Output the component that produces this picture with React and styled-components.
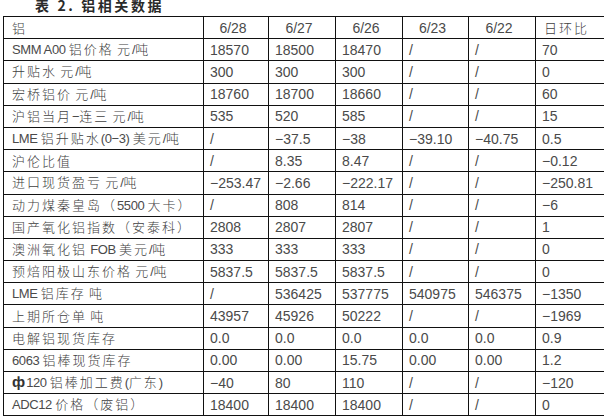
import React from "react";
import styled, { createGlobalStyle } from "styled-components";

const GlobalStyle = createGlobalStyle`
  html, body {
    margin: 0;
    padding: 0;
    background: #fff;
    overflow: hidden;
  }
  body {
    font-family: "Liberation Sans", "Noto Sans CJK SC", sans-serif;
  }
`;

const Page = styled.div`
  width: 604px;
  height: 418px;
  overflow: hidden;
`;

const Title = styled.div`
  height: 16px;
  padding-left: 35px;
  font-family: "Noto Sans CJK SC", sans-serif;
  font-weight: 700;
  font-size: 14px;
  line-height: 11px;
  letter-spacing: 2.6px;
  color: #2a2a2a;
  white-space: nowrap;
`;

const Table = styled.table`
  margin-left: 3px;
  border-collapse: collapse;
  table-layout: fixed;
  width: 602px;
  color: #4a4a4a;
  font-size: 14px;
`;

const Row = styled.tr`
  height: 22.2px;
`;

const Cell = styled.td`
  border: 1px solid #111;
  padding: 0 0 0 ${(p) => (p.$label ? 8 : 6)}px;
  text-align: ${(p) => (p.$center ? "center" : "left")};
  padding-right: ${(p) => (p.$center ? 12 : 0)}px;
  white-space: nowrap;
  overflow: hidden;
  vertical-align: middle;
  line-height: 16px;
`;

const Cjk = styled.span`
  font-family: "Noto Sans CJK SC", sans-serif;
  font-size: 13px;
  font-weight: 300;
  letter-spacing: 2px;
  color: #404040;
`;

const Latin = styled.span`
  font-size: 13px;
  letter-spacing: -0.4px;
`;

const Phi = styled.span`
  font-weight: 700;
  font-size: 15px;
  margin-right: 1px;
  color: #333;
`;

const widths = [200, 65, 67, 67, 66, 67, 70];

const header = ["6/28", "6/27", "6/26", "6/23", "6/22"];

const rows = [
  ["SMM A00 铝价格 元/吨", "18570", "18500", "18470", "/", "/", "70"],
  ["升贴水 元/吨", "300", "300", "300", "/", "/", "0"],
  ["宏桥铝价 元/吨", "18760", "18700", "18660", "/", "/", "60"],
  ["沪铝当月−连三 元/吨", "535", "520", "585", "/", "/", "15"],
  ["LME 铝升贴水(0−3) 美元/吨", "/", "−37.5", "−38", "−39.10", "−40.75", "0.5"],
  ["沪伦比值", "/", "8.35", "8.47", "/", "/", "−0.12"],
  ["进口现货盈亏 元/吨", "−253.47", "−2.66", "−222.17", "/", "/", "−250.81"],
  ["动力煤秦皇岛（5500 大卡）", "/", "808", "814", "/", "/", "−6"],
  ["国产氧化铝指数（安泰科）", "2808", "2807", "2807", "/", "/", "1"],
  ["澳洲氧化铝 FOB 美元/吨", "333", "333", "333", "/", "/", "0"],
  ["预焙阳极山东价格 元/吨", "5837.5", "5837.5", "5837.5", "/", "/", "0"],
  ["LME 铝库存 吨", "/", "536425", "537775", "540975", "546375", "−1350"],
  ["上期所仓单 吨", "43957", "45926", "50222", "/", "/", "−1969"],
  ["电解铝现货库存", "0.0", "0.0", "0.0", "0.0", "0.0", "0.9"],
  ["6063 铝棒现货库存", "0.00", "0.00", "15.75", "0.00", "0.00", "1.2"],
  ["φ120 铝棒加工费(广东)", "−40", "80", "110", "/", "/", "−120"],
  ["ADC12 价格（废铝）", "18400", "18400", "18400", "/", "/", "0"],
];

const CJK_RUN = /[\u3000-\u9fff\uff00-\uffef]/;

// split a label into chinese and latin runs, each with its own spacing
const Label = ({ text }) =>
  text.split(/([\u3000-\u9fff\uff00-\uffef]+|φ)/).map((part, i) => {
    if (!part) return null;
    if (part === "φ") return <Phi key={i}>ф</Phi>;
    if (CJK_RUN.test(part)) return <Cjk key={i}>{part}</Cjk>;
    return <Latin key={i}>{part}</Latin>;
  });

export default function App() {
  return (
    <Page>
      <GlobalStyle />
      <Title>表 2. 铝相关数据</Title>
      <Table>
        <colgroup>
          {widths.map((w, i) => (
            <col key={i} width={w} />
          ))}
        </colgroup>
        <tbody>
          <Row>
            <Cell $label>
              <Label text="铝" />
            </Cell>
            {header.map((h) => (
              <Cell key={h} $center>
                {h}
              </Cell>
            ))}
            <Cell $label>
              <Label text="日环比" />
            </Cell>
          </Row>
          {rows.map((r) => (
            <Row key={r[0]}>
              <Cell $label>
                <Label text={r[0]} />
              </Cell>
              {r.slice(1).map((v, i) => (
                <Cell key={i}>{v}</Cell>
              ))}
            </Row>
          ))}
        </tbody>
      </Table>
    </Page>
  );
}
